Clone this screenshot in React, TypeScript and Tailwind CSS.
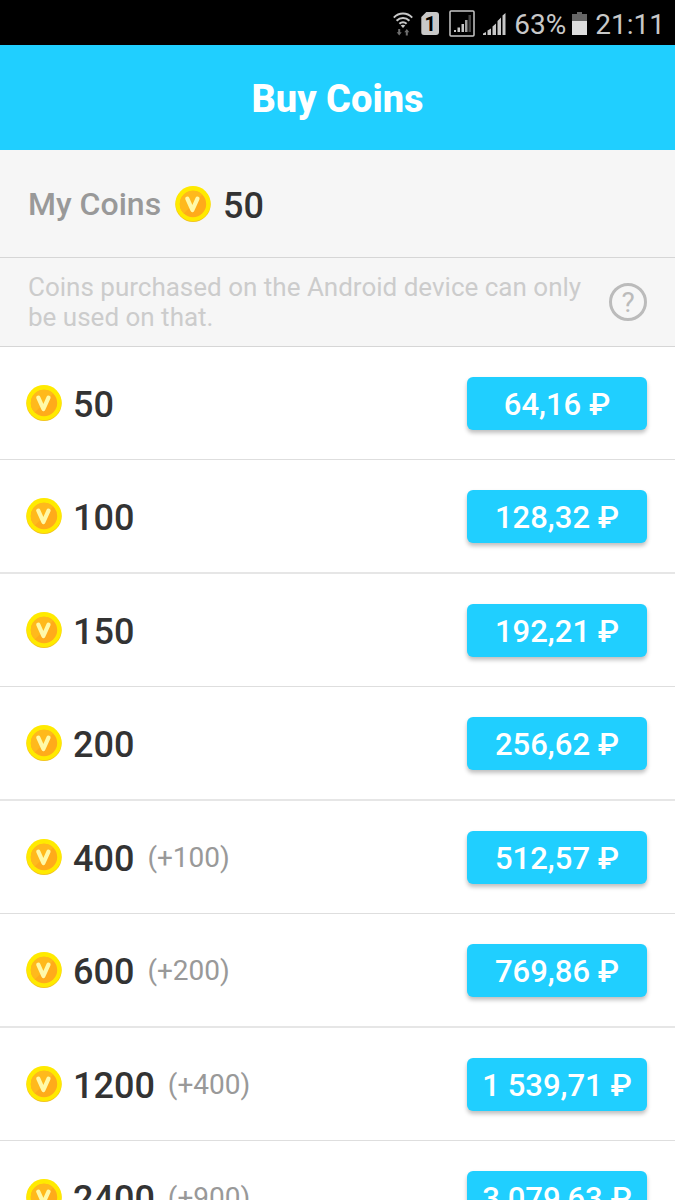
import * as React from "react";

type Pack = {
  coins: string;
  bonus?: string;
  price: string;
};

const packs: Pack[] = [
  { coins: "50", price: "64,16 ₽" },
  { coins: "100", price: "128,32 ₽" },
  { coins: "150", price: "192,21 ₽" },
  { coins: "200", price: "256,62 ₽" },
  { coins: "400", bonus: "(+100)", price: "512,57 ₽" },
  { coins: "600", bonus: "(+200)", price: "769,86 ₽" },
  { coins: "1200", bonus: "(+400)", price: "1 539,71 ₽" },
  { coins: "2400", bonus: "(+900)", price: "3 079,63 ₽" },
];

function Coin() {
  return (
    <svg viewBox="0 0 36 36" className="size-9 shrink-0" aria-hidden="true">
      <circle cx="18" cy="18.4" r="17.6" fill="#f2c21c" />
      <circle cx="18" cy="17.6" r="17.6" fill="#ffea00" />
      <circle cx="18" cy="18" r="13.2" fill="#ffab1a" />
      <path d="M8.700 27.400A13.200 13.200 0 0 1 27.300 8.600Z" fill="#ffb91c" />
      <path
        d="M12.300 12.600 17.400 24 22.500 12.600"
        fill="none"
        stroke="#fff9a8"
        strokeWidth="4.200"
        strokeLinecap="round"
        strokeLinejoin="round"
      />
    </svg>
  );
}

function WifiIcon() {
  return (
    <svg viewBox="0 0 20 24" className="h-6 w-5" aria-hidden="true">
      <g fill="none" stroke="#c8c8c8" strokeWidth="2">
        <path d="M.8 5.6C6 .2 14 .2 19.200 5.600" />
        <path d="M3.600 8.800c3.700-3.700 9.100-3.700 12.800 0" />
        <path d="M6.400 11.800c2.100-2 5.100-2 7.200 0" />
      </g>
      <path d="M7.700 13.600c1.400-1.200 3.200-1.200 4.600 0L10 16Z" fill="#c8c8c8" />
      <path
        d="M5.200 17h2v3.200h1.500l-2.500 3.200-2.500-3.200h1.500ZM12.800 23.400h2v-3.200h1.500L13.800 17l-2.500 3.200h1.500Z"
        fill="#6e6e6e"
      />
    </svg>
  );
}

function SimIcon() {
  return (
    <span className="flex h-[23px] w-[18px] items-center justify-center rounded-[3px] bg-[#c8c8c8] text-xl font-bold leading-none text-black [clip-path:polygon(5px_0,100%_0,100%_100%,0_100%,0_5px)]">
      1
    </span>
  );
}

function BoxedSignalIcon() {
  return (
    <svg viewBox="0 0 26 27" className="h-[27px] w-[26px]" aria-hidden="true">
      <rect x="1" y="1" width="24" height="25" rx="1" fill="none" stroke="#c8c8c8" strokeWidth="1.500" />
      <path d="M5 20h2v2H5ZM8.500 17.500h2.500V22H8.500ZM12.500 14h2.500v8h-2.500Z" fill="#c8c8c8" />
      <path d="M16 10h2.500v12h-2.500Z" fill="#a0a0a0" />
      <path d="M19.500 5h2.500v17h-2.500Z" fill="#444" />
    </svg>
  );
}

function SignalIcon() {
  return (
    <svg viewBox="0 0 23 24" className="h-6 w-[23px]" aria-hidden="true">
      <path
        d="M0 21.500 3 20v3H0ZM4.500 18.500 8 16.500V23H4.500ZM9.500 14.500 13 11.500V23H9.500ZM14.500 9 18 5.500V23h-3.500ZM19.500 3.500 22.500 1v22h-3Z"
        fill="#c8c8c8"
      />
    </svg>
  );
}

function BatteryIcon() {
  return (
    <svg viewBox="0 0 15 23" className="h-[23px] w-[15px]" aria-hidden="true">
      <path d="M5 0h5v2h5v7H0V2h5Z" fill="#666" />
      <path d="M0 9h15v14H0Z" fill="#dedede" />
    </svg>
  );
}

function StatusBar() {
  return (
    <div className="flex h-[45px] shrink-0 items-center justify-end bg-black pr-2.5 pt-0.5 text-[28px] leading-none text-[#c8c8c8]">
      <WifiIcon />
      <div className="ml-2">
        <SimIcon />
      </div>
      <div className="ml-2.5">
        <BoxedSignalIcon />
      </div>
      <div className="ml-2">
        <SignalIcon />
      </div>
      <span className="ml-2 pt-0.5">63%</span>
      <div className="ml-1.5">
        <BatteryIcon />
      </div>
      <span className="ml-2 pt-0.5">21:11</span>
    </div>
  );
}

export default function App() {
  return (
    <div className="flex h-screen flex-col overflow-hidden bg-white font-[Roboto,sans-serif] text-[#333]">
      <StatusBar />
      <header className="flex h-[105px] shrink-0 items-center justify-center bg-[#20cfff] pt-1">
        <h1 className="text-[38px] font-extrabold text-white">Buy Coins</h1>
      </header>

      <section className="shrink-0 bg-[#f6f6f6]">
        <div className="flex h-[108px] items-center border-b border-[#d6d6d6] px-7">
          <span className="text-[32px] font-medium text-[#999]">My Coins</span>
          <div className="ml-3.5 mr-3">
            <Coin />
          </div>
          <span className="pt-1 text-4xl font-medium">50</span>
        </div>
        <div className="flex h-[89px] items-center justify-between border-b border-[#d6d6d6] px-7">
          <p className="max-w-[570px] text-[26px] leading-[30px] text-[#ccc]">
            Coins purchased on the Android device can only be used on that.
          </p>
          <button
            type="button"
            aria-label="Help"
            className="flex size-[38px] shrink-0 items-center justify-center rounded-full border-[3px] border-[#bbb] pt-0.5 text-[28px] leading-none text-[#bbb]"
          >
            ?
          </button>
        </div>
      </section>

      <ul className="min-h-0 flex-1 overflow-y-auto [scrollbar-width:none]">
        {packs.map((pack) => (
          <li
            key={pack.coins}
            className="box-content flex h-28 items-center border-b border-[#dedede] even:border-b-2 even:border-[#e6e6e6]"
          >
            <div className="ml-[26px] mr-[11px]">
              <Coin />
            </div>
            <span className="pt-1 text-4xl font-medium">{pack.coins}</span>
            {pack.bonus && (
              <span className="ml-[13px] pt-0.5 text-[28px] text-[#999]">{pack.bonus}</span>
            )}
            <button
              type="button"
              className="ml-auto mr-7 h-[53px] w-[180px] rounded-md bg-[#20cfff] pt-0.5 text-[31px] font-medium leading-none text-white shadow-[0_3px_4px_rgba(0,0,0,0.25)]"
            >
              {pack.price}
            </button>
          </li>
        ))}
      </ul>
    </div>
  );
}
